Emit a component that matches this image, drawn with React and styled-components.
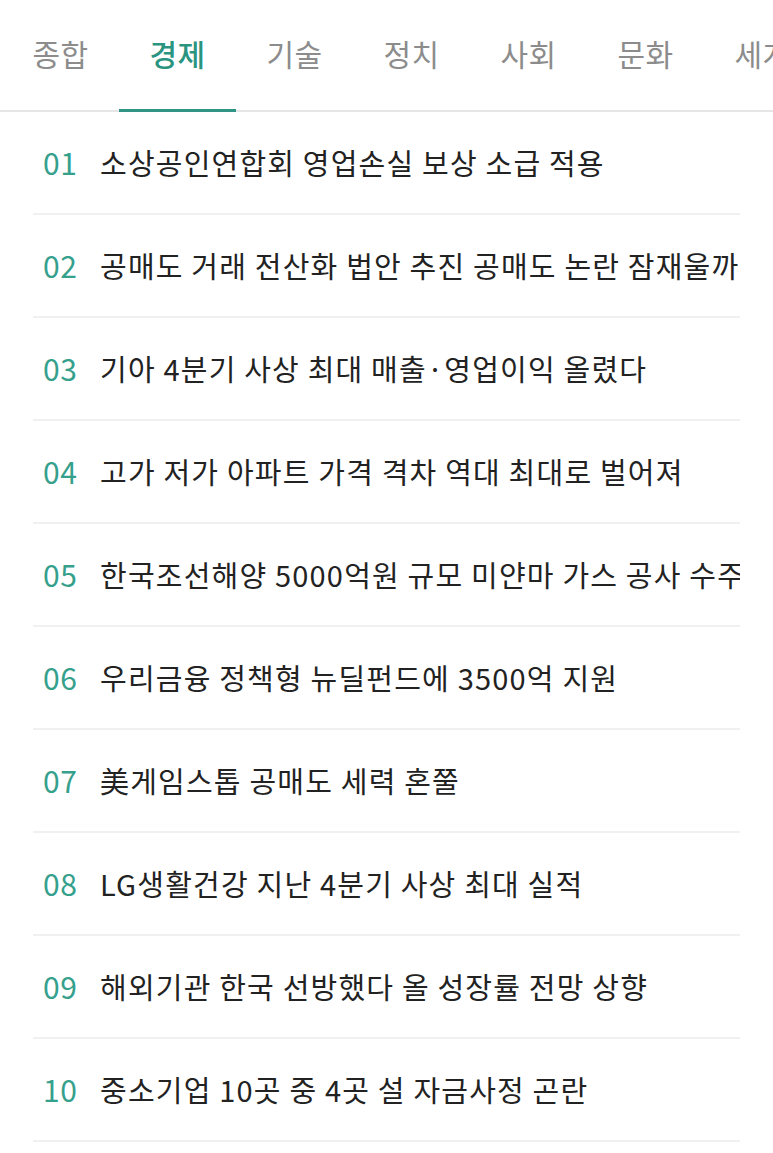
import React from 'react';
import styled, { createGlobalStyle } from 'styled-components';

const GlobalStyle = createGlobalStyle`
  * {
    box-sizing: border-box;
  }
  body {
    margin: 0;
    background: #ffffff;
    font-family: "Noto Sans CJK KR", "Noto Sans", sans-serif;
  }
`;

const Container = styled.div`
  width: 773px;
  min-height: 1153px;
  background: #ffffff;
  overflow: hidden;
`;
const TabBar = styled.nav`
  display: flex;
  height: 112px;
  padding-left: 2px;
  border-bottom: 2px solid #e6e6e6;
  white-space: nowrap;
`;
const Tab = styled.div`
  position: relative;
  flex: 0 0 117px;
  display: flex;
  align-items: center;
  justify-content: center;
  padding-bottom: 4px;
  font-size: 30px;
  font-weight: ${({ active }) => (active ? 500 : 400)};
  letter-spacing: 0.5px;
  color: ${({ active }) => (active ? '#2a9480' : '#8c8c8c')};

  &::after {
    content: '';
    position: absolute;
    left: 0;
    right: 0;
    bottom: -2px;
    height: 3px;
    background: ${({ active }) => (active ? '#2f9483' : 'transparent')};
  }
`;
const List = styled.ol`
  list-style: none;
  margin: 0;
  padding: 0 33px;
`;
const Row = styled.li`
  display: flex;
  align-items: center;
  height: 103px;
  padding: 0 0 2px 10px;
  border-bottom: 2px solid #f0f0f0;
  overflow: hidden;
  white-space: nowrap;
`;
const Rank = styled.span`
  flex: 0 0 57px;
  font-size: 30px;
  color: #35a08c;
  letter-spacing: 0.5px;
`;
const Title = styled.span`
  font-size: 29px;
  color: #222222;
  letter-spacing: 1.2px;
`;

const TABS = ['종합', '경제', '기술', '정치', '사회', '문화', '세계'];

const NEWS = [
  '소상공인연합회 영업손실 보상 소급 적용',
  '공매도 거래 전산화 법안 추진 공매도 논란 잠재울까',
  '기아 4분기 사상 최대 매출·영업이익 올렸다',
  '고가 저가 아파트 가격 격차 역대 최대로 벌어져',
  '한국조선해양 5000억원 규모 미얀마 가스 공사 수주',
  '우리금융 정책형 뉴딜펀드에 3500억 지원',
  '美게임스톱 공매도 세력 혼쭐',
  'LG생활건강 지난 4분기 사상 최대 실적',
  '해외기관 한국 선방했다 올 성장률 전망 상향',
  '중소기업 10곳 중 4곳 설 자금사정 곤란',
];

const App = () => {
  return (
    <Container>
      <GlobalStyle />
      <TabBar>
        {TABS.map((tab) => (
          <Tab key={tab} active={tab === '경제'}>
            {tab}
          </Tab>
        ))}
      </TabBar>
      <List>
        {NEWS.map((title, i) => (
          <Row key={title}>
            <Rank>{String(i + 1).padStart(2, '0')}</Rank>
            <Title>{title}</Title>
          </Row>
        ))}
      </List>
    </Container>
  );
};

export default App;
